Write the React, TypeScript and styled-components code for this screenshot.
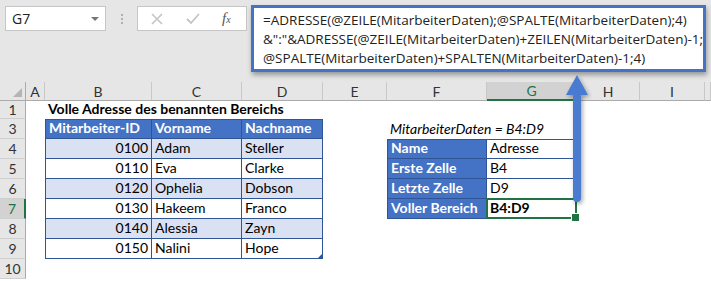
import React from 'react';
import styled, { createGlobalStyle } from 'styled-components';

const HEAD = '#4472C4';
const BAND = '#D9E1F2';
const LINE = '#2F5597';
const GREEN = '#217346';
const CHROME = '#e6e6e6';

const Global = createGlobalStyle`
  html, body { margin: 0; padding: 0; background: #fff; }
  body { width: 711px; height: 281px; overflow: hidden; font-family: Lato, "Liberation Sans", sans-serif; }
  * { box-sizing: border-box; }
`;

const Root = styled.div`
  position: relative;
  width: 711px;
  height: 281px;
  overflow: hidden;
  background: #fff;
`;

const Toolbar = styled.div`
  display: flex;
  align-items: flex-start;
  height: 82px;
  padding: 5px 0 0 5px;
  background: ${CHROME};
`;

const NameBox = styled.div`
  margin-top: 1px;
  width: 101px;
  height: 25px;
  border: 1px solid #c6c6c6;
  background: #fff;
  display: flex;
  align-items: center;
  justify-content: space-between;
  padding: 0 6px 0 6px;
  font-family: "Open Sans", sans-serif;
  font-size: 14px;
  color: #222;
`;

const DropTri = styled.span`
  width: 0;
  height: 0;
  border-left: 4px solid transparent;
  border-right: 4px solid transparent;
  border-top: 4px solid #777;
`;

const Dots = styled.div`
  width: 31px;
  height: 27px;
  display: flex;
  flex-direction: column;
  align-items: center;
  justify-content: center;
  gap: 2px;
  & > span {
    width: 2px;
    height: 2px;
    background: #b0b0b0;
  }
`;

const FxBox = styled.div`
  margin-top: 1px;
  width: 110px;
  height: 25px;
  border: 1px solid #c6c6c6;
  background: #fff;
  display: flex;
  align-items: center;
  padding-left: 12px;
  gap: 21px;
`;

const FxLabel = styled.span`
  font-family: "Liberation Serif", serif;
  font-style: italic;
  font-size: 15px;
  color: #555;
  & > sub {
    font-size: 10px;
    vertical-align: baseline;
  }
`;

const FormulaBox = styled.div`
  position: relative;
  z-index: 2;
  margin-left: 4px;
  width: 455px;
  height: 67px;
  border: 3px solid ${HEAD};
  background: #fff;
  box-shadow: 1px 3px 5px rgba(0, 0, 0, 0.35);
  padding: 3px 0 0 9px;
  font-family: "Open Sans", sans-serif;
  font-size: 13.5px;
  line-height: 19px;
  color: #222;
`;

const FormulaLine = styled.div`
  white-space: nowrap;
`;

const Sheet = styled.div`
  display: grid;
  grid-template-columns: 26px 19px 107px 90px 81px 64px 100px 90px 63px 65px 1fr;
  grid-template-rows: 19px 18px repeat(8, 20px);
`;

const Corner = styled.div`
  position: relative;
  background: ${CHROME};
  border-right: 1px solid #ababab;
  border-bottom: 1px solid #ababab;
  &::after {
    content: '';
    position: absolute;
    right: 3px;
    bottom: 3px;
    width: 0;
    height: 0;
    border-left: 9px solid transparent;
    border-bottom: 9px solid #b4b4b4;
  }
`;

const ColHead = styled.div<{ $sel?: boolean }>`
  display: flex;
  align-items: center;
  justify-content: center;
  background: ${(p) => (p.$sel ? '#d2d2d2' : CHROME)};
  color: ${(p) => (p.$sel ? GREEN : '#333')};
  border-right: 1px solid #c8c8c8;
  border-bottom: ${(p) => (p.$sel ? `2px solid ${GREEN}` : '1px solid #ababab')};
  font-size: 14px;
`;

const RowHead = styled.div<{ $sel?: boolean }>`
  display: flex;
  align-items: center;
  justify-content: center;
  background: ${(p) => (p.$sel ? '#d2d2d2' : CHROME)};
  color: ${(p) => (p.$sel ? GREEN : '#333')};
  border-bottom: 1px solid #cfcfcf;
  border-right: ${(p) => (p.$sel ? `2px solid ${GREEN}` : '1px solid #ababab')};
  font-size: 14px;
`;

type CellProps = {
  $fill?: string;
  $color?: string;
  $bold?: boolean;
  $italic?: boolean;
  $right?: boolean;
  $box?: boolean;
  $bl?: boolean;
  $bt?: boolean;
  $sel?: boolean;
  $handle?: boolean;
};

const Cell = styled.div<CellProps>`
  position: relative;
  display: flex;
  align-items: flex-end;
  justify-content: ${(p) => (p.$right ? 'flex-end' : 'flex-start')};
  padding: 0 3px 1px 3px;
  white-space: nowrap;
  font-size: 14px;
  line-height: 18px;
  background: ${(p) => p.$fill || 'transparent'};
  color: ${(p) => p.$color || '#000'};
  font-weight: ${(p) => (p.$bold ? 700 : 400)};
  font-style: ${(p) => (p.$italic ? 'italic' : 'normal')};
  border-right: ${(p) => (p.$box ? `1px solid ${LINE}` : 'none')};
  border-bottom: ${(p) => (p.$box ? `1px solid ${LINE}` : 'none')};
  border-left: ${(p) => (p.$bl ? `1px solid ${LINE}` : 'none')};
  border-top: ${(p) => (p.$bt ? `1px solid ${LINE}` : 'none')};
  ${(p) =>
    p.$sel &&
    `
    &::after {
      content: '';
      position: absolute;
      left: -1px; top: -1px; right: -1px; bottom: -1px;
      border: 2px solid ${GREEN};
      z-index: 1;
    }
    &::before {
      content: '';
      position: absolute;
      right: -4px; bottom: -4px;
      width: 7px; height: 7px;
      background: ${GREEN};
      border: 1px solid #fff;
      z-index: 2;
    }
  `}
  ${(p) =>
    p.$handle &&
    `
    &::after {
      content: '';
      position: absolute;
      right: 0; bottom: 0;
      width: 0; height: 0;
      border-left: 4px solid transparent;
      border-bottom: 4px solid ${LINE};
    }
  `}
`;

const ArrowLayer = styled.svg`
  position: absolute;
  left: 556px;
  top: 68px;
  z-index: 3;
  overflow: visible;
`;

const COLS = ['A', 'B', 'C', 'D', 'E', 'F', 'G', 'H', 'I'];
const ROWS = [1, 3, 4, 5, 6, 7, 8, 9, 10];

const people = [
  ['0100', 'Adam', 'Steller'],
  ['0110', 'Eva', 'Clarke'],
  ['0120', 'Ophelia', 'Dobson'],
  ['0130', 'Hakeem', 'Franco'],
  ['0140', 'Alessia', 'Zayn'],
  ['0150', 'Nalini', 'Hope'],
];

const info = [
  ['Name', 'Adresse'],
  ['Erste Zelle', 'B4'],
  ['Letzte Zelle', 'D9'],
  ['Voller Bereich', 'B4:D9'],
];

type Spec = { text?: string; props: CellProps };

function spec(r: number, c: number): Spec {
  if (r === 1 && c === 1) return { text: 'Volle Adresse des benannten Bereichs', props: { $bold: true } };
  if (r === 3 && c >= 1 && c <= 3) {
    return {
      text: ['Mitarbeiter-ID', 'Vorname', 'Nachname'][c - 1],
      props: { $fill: HEAD, $color: '#fff', $bold: true, $box: true, $bt: true, $bl: c === 1 },
    };
  }
  if (r === 3 && c === 5) return { text: 'MitarbeiterDaten = B4:D9', props: { $italic: true } };
  if (r >= 4 && r <= 9 && c >= 1 && c <= 3) {
    return {
      text: people[r - 4][c - 1],
      props: {
        $fill: r % 2 === 0 ? BAND : '#fff',
        $box: true,
        $bl: c === 1,
        $right: c === 1,
        $handle: r === 9 && c === 3,
      },
    };
  }
  if (r >= 4 && r <= 7 && c === 5) {
    return {
      text: info[r - 4][0],
      props: { $fill: HEAD, $color: '#fff', $bold: true, $box: true, $bl: true, $bt: r === 4 },
    };
  }
  if (r >= 4 && r <= 7 && c === 6) {
    return {
      text: info[r - 4][1],
      props: { $fill: '#fff', $box: true, $bt: r === 4, $bold: r === 7, $sel: r === 7 },
    };
  }
  return { props: {} };
}

const Arrow = () => (
  <ArrowLayer width="44" height="140" viewBox="0 0 44 140">
    <defs>
      <filter id="sh" x="-50%" y="-20%" width="200%" height="140%">
        <feDropShadow dx="1.5" dy="2" stdDeviation="2" floodColor="#000" floodOpacity="0.35" />
      </filter>
    </defs>
    <g filter="url(#sh)" fill="#4a7bd0">
      <polygon points="21,7 10,27 32,27" />
      <rect x="17" y="25" width="8" height="109" rx="4" />
    </g>
  </ArrowLayer>
);

export default function App() {
  return (
    <Root>
      <Global />
      <Toolbar>
        <NameBox>
          <span>G7</span>
          <DropTri />
        </NameBox>
        <Dots>
          <span />
          <span />
          <span />
        </Dots>
        <FxBox>
          <svg width="14" height="14" viewBox="0 0 14 14">
            <path d="M2 2 L12 12 M12 2 L2 12" stroke="#c4c4c4" strokeWidth="1.6" fill="none" />
          </svg>
          <svg width="16" height="14" viewBox="0 0 16 14">
            <path d="M2 7 L6 11 L14 2" stroke="#c4c4c4" strokeWidth="1.8" fill="none" />
          </svg>
          <FxLabel>
            f<sub>x</sub>
          </FxLabel>
        </FxBox>
        <FormulaBox>
          <FormulaLine>=ADRESSE(@ZEILE(MitarbeiterDaten);@SPALTE(MitarbeiterDaten);4)</FormulaLine>
          <FormulaLine>&amp;":"&amp;ADRESSE(@ZEILE(MitarbeiterDaten)+ZEILEN(MitarbeiterDaten)-1;</FormulaLine>
          <FormulaLine>@SPALTE(MitarbeiterDaten)+SPALTEN(MitarbeiterDaten)-1;4)</FormulaLine>
        </FormulaBox>
      </Toolbar>
      <Sheet>
        <Corner />
        {COLS.map((c) => (
          <ColHead key={c} $sel={c === 'G'}>
            {c}
          </ColHead>
        ))}
        <ColHead />
        {ROWS.map((r) => (
          <React.Fragment key={r}>
            <RowHead $sel={r === 7}>{r}</RowHead>
            {COLS.map((_, ci) => {
              const s = spec(r, ci);
              return (
                <Cell key={ci} {...s.props}>
                  {s.text}
                </Cell>
              );
            })}
            <Cell />
          </React.Fragment>
        ))}
      </Sheet>
      <Arrow />
    </Root>
  );
}
